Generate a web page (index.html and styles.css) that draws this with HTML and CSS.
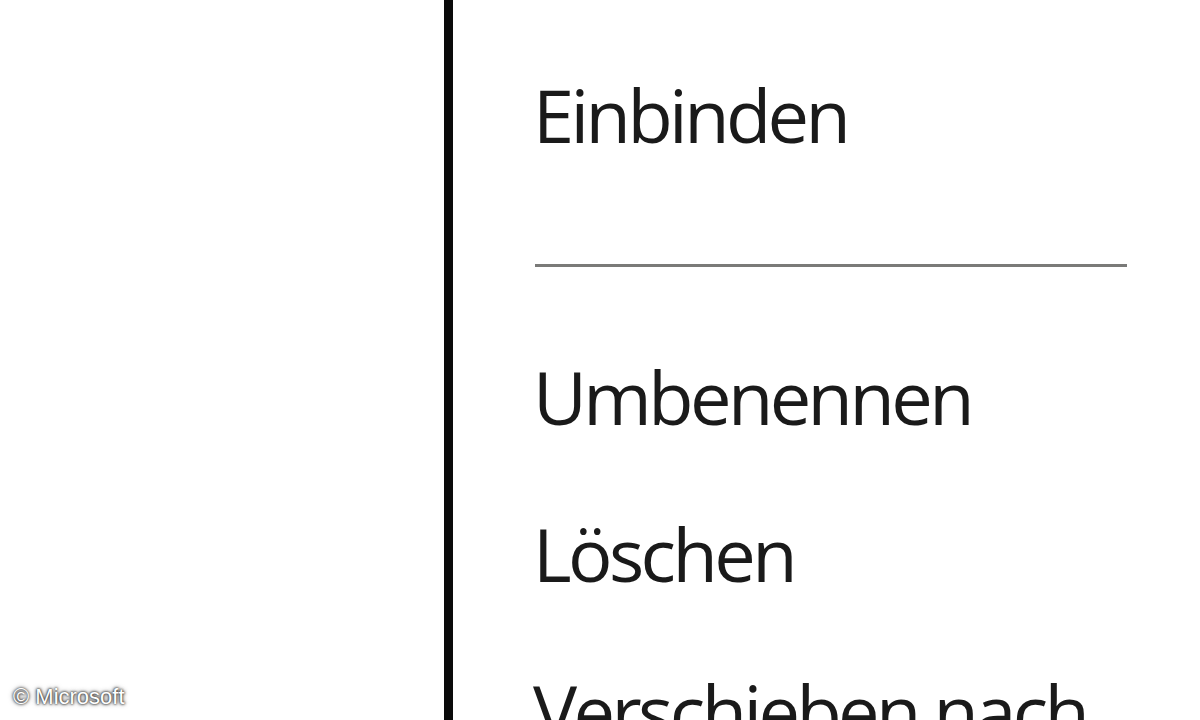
FILE: index.html
```html
<!DOCTYPE html>
<html lang="de">
<head>
    <meta charset="UTF-8">
    <meta name="viewport" content="width=device-width, initial-scale=1.0">
    <title>Kontextmenü</title>
    <link rel="stylesheet" href="styles.css">
</head>
<body>
  <div class="screen">
    <div class="desktop"></div>

    <!-- Kontextmenü (vergrößert) -->
    <ul class="menu">
      <li class="item">Einbinden</li>
      <li class="separator"></li>
      <li class="item">Umbenennen</li>
      <li class="item">Löschen</li>
      <li class="item">Verschieben nach</li>
    </ul>

    <div class="credit">© Microsoft</div>
  </div>
</body>
</html>
```

FILE: styles.css
```css
* { margin: 0; padding: 0; box-sizing: border-box; }

body {
    background-color: #ffffff;
    overflow: hidden;
}

.screen {
    position: relative;
    display: flex;
    width: 1200px;
    height: 720px;
    overflow: hidden;
    background-color: #ffffff;
}

/* leere Fläche links */
.desktop {
    width: 444px;
    flex-shrink: 0;
}

/* Menü */
.menu {
    list-style: none;
    border-left: 9px solid #0a0a0a;
    padding-top: 36px;
    padding-left: 80px;
    flex: 1;
    font-family: "Open Sans", "Noto Sans", sans-serif;
    font-size: 74px;
    letter-spacing: -3.6px;
    color: #1a1a1a;
}

.menu .item {
    height: 157px;
    line-height: 157px;
    white-space: nowrap;
}

.menu .separator {
    height: 125px;
    padding-top: 71px;
    margin-left: 2px;
    width: 592px;
}

.menu .separator::before {
    content: "";
    display: block;
    height: 3px;
    background-color: #7a7a78;
}

/* Copyright-Hinweis */
.credit {
    position: absolute;
    left: 13px;
    bottom: 10px;
    font-family: "Liberation Sans", Arial, sans-serif;
    font-size: 22px;
    color: #ffffff;
    text-shadow: 0 0 2px #333, 0 0 3px #444, 0 0 5px #666;
}
```
